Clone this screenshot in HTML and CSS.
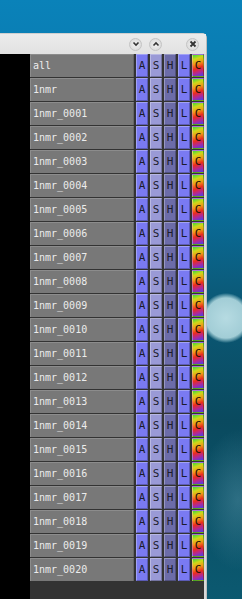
FILE: index.html
```html
<!DOCTYPE html>
<html lang="en">

<head>
   <meta charset="UTF-8">
   <meta name="viewport" content="width=device-width, initial-scale=1.0">
   <title>Object list</title>

   <link rel="stylesheet" href="styles.css">
</head>

<body>
   <div class="desktop">
      <div class="window">
         <div class="window__title">
            <div class="title__button">
               <svg width="8" height="8" viewBox="0 0 8 8"><path d="M1.5 2.5 L4 5 L6.5 2.5" fill="none" stroke="#333" stroke-width="1.6"/></svg>
            </div>
            <div class="title__button">
               <svg width="8" height="8" viewBox="0 0 8 8"><path d="M1.5 5.5 L4 3 L6.5 5.5" fill="none" stroke="#333" stroke-width="1.6"/></svg>
            </div>
            <div class="title__button title__close">
               <svg width="8" height="8" viewBox="0 0 8 8"><path d="M1.5 1.5 L6.5 6.5 M6.5 1.5 L1.5 6.5" fill="none" stroke="#333" stroke-width="1.8"/></svg>
            </div>
         </div>

         <div class="window__body">
            <div class="side"></div>

            <div class="list">
               <div class="row"><div class="name">all</div><div class="btn btn__a">A</div><div class="btn btn__s">S</div><div class="btn btn__h">H</div><div class="btn btn__l">L</div><div class="btn btn__c">C</div></div>
               <div class="row"><div class="name">1nmr</div><div class="btn btn__a">A</div><div class="btn btn__s">S</div><div class="btn btn__h">H</div><div class="btn btn__l">L</div><div class="btn btn__c">C</div></div>
               <div class="row"><div class="name">1nmr_0001</div><div class="btn btn__a">A</div><div class="btn btn__s">S</div><div class="btn btn__h">H</div><div class="btn btn__l">L</div><div class="btn btn__c">C</div></div>
               <div class="row"><div class="name">1nmr_0002</div><div class="btn btn__a">A</div><div class="btn btn__s">S</div><div class="btn btn__h">H</div><div class="btn btn__l">L</div><div class="btn btn__c">C</div></div>
               <div class="row"><div class="name">1nmr_0003</div><div class="btn btn__a">A</div><div class="btn btn__s">S</div><div class="btn btn__h">H</div><div class="btn btn__l">L</div><div class="btn btn__c">C</div></div>
               <div class="row"><div class="name">1nmr_0004</div><div class="btn btn__a">A</div><div class="btn btn__s">S</div><div class="btn btn__h">H</div><div class="btn btn__l">L</div><div class="btn btn__c">C</div></div>
               <div class="row"><div class="name">1nmr_0005</div><div class="btn btn__a">A</div><div class="btn btn__s">S</div><div class="btn btn__h">H</div><div class="btn btn__l">L</div><div class="btn btn__c">C</div></div>
               <div class="row"><div class="name">1nmr_0006</div><div class="btn btn__a">A</div><div class="btn btn__s">S</div><div class="btn btn__h">H</div><div class="btn btn__l">L</div><div class="btn btn__c">C</div></div>
               <div class="row"><div class="name">1nmr_0007</div><div class="btn btn__a">A</div><div class="btn btn__s">S</div><div class="btn btn__h">H</div><div class="btn btn__l">L</div><div class="btn btn__c">C</div></div>
               <div class="row"><div class="name">1nmr_0008</div><div class="btn btn__a">A</div><div class="btn btn__s">S</div><div class="btn btn__h">H</div><div class="btn btn__l">L</div><div class="btn btn__c">C</div></div>
               <div class="row"><div class="name">1nmr_0009</div><div class="btn btn__a">A</div><div class="btn btn__s">S</div><div class="btn btn__h">H</div><div class="btn btn__l">L</div><div class="btn btn__c">C</div></div>
               <div class="row"><div class="name">1nmr_0010</div><div class="btn btn__a">A</div><div class="btn btn__s">S</div><div class="btn btn__h">H</div><div class="btn btn__l">L</div><div class="btn btn__c">C</div></div>
               <div class="row"><div class="name">1nmr_0011</div><div class="btn btn__a">A</div><div class="btn btn__s">S</div><div class="btn btn__h">H</div><div class="btn btn__l">L</div><div class="btn btn__c">C</div></div>
               <div class="row"><div class="name">1nmr_0012</div><div class="btn btn__a">A</div><div class="btn btn__s">S</div><div class="btn btn__h">H</div><div class="btn btn__l">L</div><div class="btn btn__c">C</div></div>
               <div class="row"><div class="name">1nmr_0013</div><div class="btn btn__a">A</div><div class="btn btn__s">S</div><div class="btn btn__h">H</div><div class="btn btn__l">L</div><div class="btn btn__c">C</div></div>
               <div class="row"><div class="name">1nmr_0014</div><div class="btn btn__a">A</div><div class="btn btn__s">S</div><div class="btn btn__h">H</div><div class="btn btn__l">L</div><div class="btn btn__c">C</div></div>
               <div class="row"><div class="name">1nmr_0015</div><div class="btn btn__a">A</div><div class="btn btn__s">S</div><div class="btn btn__h">H</div><div class="btn btn__l">L</div><div class="btn btn__c">C</div></div>
               <div class="row"><div class="name">1nmr_0016</div><div class="btn btn__a">A</div><div class="btn btn__s">S</div><div class="btn btn__h">H</div><div class="btn btn__l">L</div><div class="btn btn__c">C</div></div>
               <div class="row"><div class="name">1nmr_0017</div><div class="btn btn__a">A</div><div class="btn btn__s">S</div><div class="btn btn__h">H</div><div class="btn btn__l">L</div><div class="btn btn__c">C</div></div>
               <div class="row"><div class="name">1nmr_0018</div><div class="btn btn__a">A</div><div class="btn btn__s">S</div><div class="btn btn__h">H</div><div class="btn btn__l">L</div><div class="btn btn__c">C</div></div>
               <div class="row"><div class="name">1nmr_0019</div><div class="btn btn__a">A</div><div class="btn btn__s">S</div><div class="btn btn__h">H</div><div class="btn btn__l">L</div><div class="btn btn__c">C</div></div>
               <div class="row"><div class="name">1nmr_0020</div><div class="btn btn__a">A</div><div class="btn btn__s">S</div><div class="btn btn__h">H</div><div class="btn btn__l">L</div><div class="btn btn__c">C</div></div>
            </div>
         </div>
      </div>
   </div>
</body>

</html>
```

FILE: styles.css
```css
* {
   box-sizing: border-box;
   margin: 0;
   padding: 0;
   line-height: 1;
}

body {
   width: 242px;
   height: 599px;
   overflow: hidden;
   font-family: "DejaVu Sans Mono", "Liberation Mono", monospace;
}

.desktop {
   height: 599px;
   padding-top: 33px;
   background:
      radial-gradient(circle at 226px 318px, #b6dbe2 0, #a2cdd6 20px, rgba(140, 190, 200, 0.5) 23px, transparent 25px),
      radial-gradient(ellipse 40px 70px at 238px 500px, rgba(80, 140, 160, 0.5), transparent),
      linear-gradient(to bottom, #0a82b9 0, #0a73a6 180px, #0b5b7a 290px, #0a4a5f 420px, #0b5970 599px);
}

.window {
   width: 207px;
   height: 566px;
   background-color: #d8d8d8;
   border-top: 1px solid #cfcfcf;
   border-right: 1px solid #bdbdbd;
   border-top-right-radius: 5px;
   display: flex;
   flex-direction: column;
}

.window__title {
   height: 20px;
   flex-shrink: 0;
   background: linear-gradient(#ececec, #e2e2e2);
   display: flex;
   align-items: center;
   justify-content: flex-end;
   padding-right: 7px;
   gap: 7px;
}

.title__button {
   width: 13px;
   height: 13px;
   border-radius: 50%;
   background: radial-gradient(#f2f2f2, #d4d4d4);
   border: 1px solid #c4c4c4;
   display: flex;
   align-items: center;
   justify-content: center;
}

.title__close {
   margin-left: 17px;
}

.window__body {
   flex: 1;
   display: flex;
}

.side {
   width: 30px;
   flex-shrink: 0;
   background-color: #000;
}

.list {
   width: 174px;
   flex-shrink: 0;
   background-color: #333;
   display: flex;
   flex-direction: column;
   gap: 1px;
}

.row {
   height: 23px;
   flex-shrink: 0;
   display: flex;
   gap: 2px;
}

.name {
   width: 104px;
   flex-shrink: 0;
   background-color: #787878;
   border-top: 1px solid #8c8c8c;
   border-left: 1px solid #8c8c8c;
   border-right: 1px solid #666;
   color: #ececec;
   font-size: 10px;
   padding-left: 2px;
   display: flex;
   align-items: center;
}

.btn {
   width: 12px;
   flex-shrink: 0;
   border-top: 1px solid rgba(255, 255, 255, 0.3);
   border-left: 1px solid rgba(255, 255, 255, 0.3);
   border-right: 1px solid rgba(0, 0, 0, 0.25);
   border-bottom: 1px solid rgba(0, 0, 0, 0.25);
   color: #1c1c2c;
   font-size: 11px;
   display: flex;
   align-items: center;
   justify-content: center;
}

.btn__a,
.btn__l {
   background-color: #7a7af2;
}

.btn__s {
   background-color: #9a9ad6;
}

.btn__h {
   background-color: #6c6ca8;
}

.btn__c {
   background: linear-gradient(160deg, #3cd83c 0%, #d0d818 20%, #f09818 40%, #ec2c1c 60%, #b02898 80%, #4444ec 100%);
   color: #201008;
}
```
